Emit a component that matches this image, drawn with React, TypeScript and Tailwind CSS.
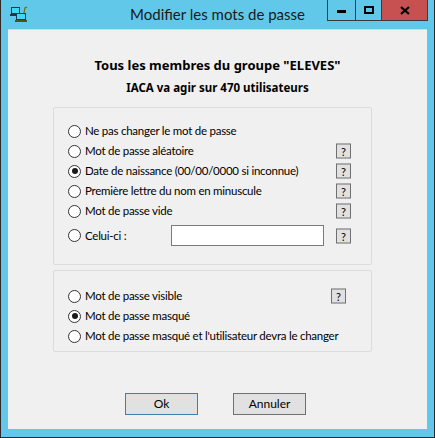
import React from "react";

const font = { fontFamily: '"Noto Sans", "Liberation Sans", sans-serif' };
const ui = { fontFamily: 'Lato, "Noto Sans", sans-serif' };

function Radio({ checked }: { checked?: boolean }) {
  return (
    <span className="flex h-[13px] w-[13px] shrink-0 items-center justify-center rounded-full border border-[#333333] bg-white">
      {checked && <span className="h-[6px] w-[6px] rounded-full bg-[#1a1a1a]" />}
    </span>
  );
}

function Help() {
  return (
    <span
      className="flex h-[15px] w-[15px] items-center justify-center border border-[#707070] bg-[#e1e1e1] text-[11px] leading-none text-black"
      style={ui}
    >
      ?
    </span>
  );
}

function Row({
  label,
  checked,
  help,
  helpLeft = 282,
  children,
  h = 20,
}: {
  label: string;
  checked?: boolean;
  help?: boolean;
  helpLeft?: number;
  children?: React.ReactNode;
  h?: number;
}) {
  return (
    <div className="relative flex items-center" style={{ height: h }}>
      <div className="flex items-center gap-[4px] pl-[14px]">
        <Radio checked={checked} />
        <span className="whitespace-nowrap text-[11.5px] tracking-[-0.25px] text-black" style={ui}>
          {label}
        </span>
      </div>
      {children}
      {help && (
        <div className="absolute top-1/2 -translate-y-1/2" style={{ left: helpLeft }}>
          <Help />
        </div>
      )}
    </div>
  );
}

export default function App() {
  return (
    <div
      className="relative flex h-[438px] w-[435px] flex-col overflow-hidden border-x border-b border-[#2b2b2b] bg-[#62c8e9]"
      style={font}
    >
      {/* title bar */}
      <div className="relative flex h-[29px] shrink-0 items-start">
        <svg className="absolute left-[9px] top-[6px]" width="18" height="17" viewBox="0 0 18 17">
          <rect x="1" y="1" width="9" height="7" fill="#1a3a5a" />
          <rect x="2" y="2" width="7" height="5" fill="#3fd8f0" />
          <rect x="0" y="8" width="10" height="2" fill="#333" />
          <rect x="6" y="7" width="10" height="8" fill="#1a3a5a" />
          <rect x="7" y="8" width="8" height="5" fill="#3fd8f0" />
          <rect x="5" y="14" width="12" height="2" fill="#55501a" />
          <path d="M14 7 L15 2 L17 1" stroke="#6a6a10" strokeWidth="1.2" fill="none" />
        </svg>
        <div
          className="absolute left-0 right-0 top-[4px] text-center text-[15px] leading-[20px] text-[#1a1a1a]"
          style={ui}
        >
          Modifier les mots de passe
        </div>
        <div className="absolute right-[6px] top-0 flex h-[21px] border-x border-b border-[#3c3c3c]">
          <div className="flex w-[28px] items-center justify-center border-r border-[#3c3c3c]">
            <span className="mt-[3px] h-[3px] w-[9px] bg-black" />
          </div>
          <div className="flex w-[26px] items-center justify-center border-r border-[#3c3c3c]">
            <span className="h-[8px] w-[10px] border-2 border-black" />
          </div>
          <div className="flex w-[45px] items-center justify-center bg-[#c75050]">
            <svg width="10" height="9" viewBox="0 0 10 9">
              <path d="M1 1 L9 8 M9 1 L1 8" stroke="black" strokeWidth="2.2" />
            </svg>
          </div>
        </div>
      </div>

      {/* client area */}
      <div className="mx-[7px] flex h-[400px] flex-col border-t border-[#cfdbe3] bg-[#f0f0f0]">
        <div className="mt-[26px] text-center text-[13px] font-bold leading-[18px] text-black">
          Tous les membres du groupe "ELEVES"
        </div>
        <div className="mt-[6px] text-center text-[11.5px] font-bold leading-[15px] text-black">
          IACA va agir sur 470 utilisateurs
        </div>

        <div className="ml-[45px] mt-[12px] flex h-[158px] w-[319px] flex-col rounded-[2px] border border-[#dcdcdc] pt-[13px]">
          <Row label="Ne pas changer le mot de passe" />
          <Row label="Mot de passe aléatoire" help />
          <Row label="Date de naissance (00/00/0000 si inconnue)" checked help />
          <Row label="Première lettre du nom en minuscule" help />
          <Row label="Mot de passe vide" help />
          <div className="h-[4px]" />
          <Row label="Celui-ci :" help h={21}>
            <div className="absolute left-[117px] top-0 h-[21px] w-[153px] border border-[#7a7a7a] bg-white" />
          </Row>
        </div>

        <div className="ml-[45px] mt-[5px] flex h-[82px] w-[319px] flex-col rounded-[2px] border border-[#dcdcdc] pt-[15px]">
          <Row label="Mot de passe visible" help helpLeft={277} />
          <Row label="Mot de passe masqué" checked />
          <Row label="Mot de passe masqué et l'utilisateur devra le changer" />
        </div>

        <div className="mt-[41px] flex" style={ui}>
          <button className="ml-[117px] flex h-[22px] w-[73px] items-center justify-center border border-[#3c7fb1] bg-[#e1e1e1] text-[12px] text-black">
            Ok
          </button>
          <button className="ml-[35px] flex h-[22px] w-[73px] items-center justify-center border border-[#707070] bg-[#e1e1e1] text-[12px] text-black">
            Annuler
          </button>
        </div>
      </div>
    </div>
  );
}
